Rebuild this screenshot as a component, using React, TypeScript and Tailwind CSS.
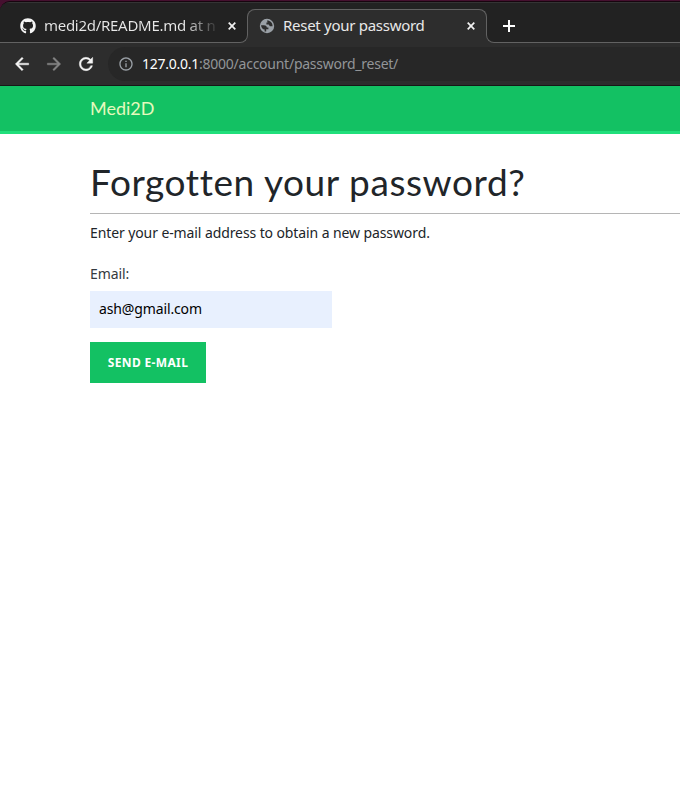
import type { ReactNode } from "react";
import { FaGithub } from "react-icons/fa";
import { MdInfoOutline } from "react-icons/md";

function GlobeIcon() {
  return (
    <svg width="16" height="16" viewBox="0 0 16 16" className="shrink-0">
      <circle cx="8" cy="8" r="7.2" fill="#9aa0a6" />
      <path
        d="M2 7.2 H5 C6.6 7.2 7.8 8 7.8 9.6 H9.4 V11.2 H7.2 V13.6 H5.6 V11.6 C3.6 11.4 2.4 9.6 2 7.2 Z M8 2.4 C11.6 2.4 13.6 5 13.6 8.2 H11 C10.4 8.2 10.4 6.8 9.6 6.4 H7.4 V4.4 H8.6 Z"
        fill="#2d2d2d"
      />
    </svg>
  );
}

function CloseIcon() {
  return (
    <svg width="8" height="8" viewBox="0 0 8 8" className="shrink-0">
      <path d="M0.7 0.7 L7.3 7.3 M7.3 0.7 L0.7 7.3" stroke="#f1f1f1" strokeWidth="1.7" />
    </svg>
  );
}

function NavIcon({ d, className }: { d: string; className: string }) {
  return (
    <svg width="20" height="20" viewBox="0 0 24 24" fill="currentColor" stroke="currentColor" strokeWidth="0.5" className={className}>
      <path d={d} />
    </svg>
  );
}

function Tab({ icon, children }: { icon: ReactNode; children: ReactNode }) {
  return (
    <div className="flex h-[33px] items-center pr-[11px] text-[15px] tracking-[-0.28px] text-[#e8e8e8]">
      {icon}
      {children}
      <CloseIcon />
    </div>
  );
}

function TabStrip() {
  return (
    <div className="flex h-[40px] bg-[#222222]">
      <div className="relative z-10 w-[247px] shrink-0 bg-[#222222]">
        <div className="absolute right-[-1px] bottom-0 h-[12px] w-[12px] bg-[#2d2d2d]" />
        <div className="absolute right-[-1px] bottom-0 left-0 h-[12px] rounded-br-[8px] border-r border-b border-[#626262] bg-[#222222]" />
        <div className="relative pt-[6px] pl-[20px]">
          <Tab icon={<FaGithub size={16} className="shrink-0 text-[#f5f5f5]" />}>
            <span className="ml-[8px] grow bg-linear-to-r from-[#e8e8e8] from-[140px] to-transparent to-[176px] bg-clip-text whitespace-nowrap text-transparent">
              medi2d/README.md at n
            </span>
          </Tab>
        </div>
      </div>
      <div className="relative mt-[6px] w-[240px] shrink-0 rounded-t-[8px] bg-[#2d2d2d] pr-px pl-[12px]">
        <div className="absolute inset-x-0 top-0 h-[23px] rounded-t-[8px] border-x border-t border-[#626262]" />
        <Tab icon={<GlobeIcon />}>
          <span className="ml-[8px] grow whitespace-nowrap">Reset your password</span>
        </Tab>
      </div>
      <div className="relative grow bg-[#222222]">
        <div className="absolute bottom-0 left-[-1px] h-[12px] w-[12px] bg-[#2d2d2d]" />
        <div className="absolute right-0 bottom-0 left-[-1px] h-[12px] rounded-bl-[8px] border-b border-l border-[#626262] bg-[#222222]" />
        <div className="relative flex h-[46px] items-center pl-[16px]">
          <svg width="12" height="12" viewBox="0 0 12 12">
            <path d="M0 6 H12 M6 0 V12" stroke="white" strokeWidth="2" />
          </svg>
        </div>
      </div>
    </div>
  );
}

function Toolbar() {
  return (
    <div className="flex h-[43px] items-center border-b border-[#171717] bg-[#2d2d2d] pl-[12px]">
      <NavIcon className="text-[#f5f5f5]" d="M20 11H7.83l5.59-5.59L12 4l-8 8 8 8 1.41-1.41L7.83 13H20v-2z" />
      <NavIcon className="ml-[12px] text-[#858585]" d="M12 4l-1.41 1.41L16.17 11H4v2h12.17l-5.58 5.59L12 20l8-8z" />
      <NavIcon
        className="ml-[12px] text-[#f5f5f5]"
        d="M17.65 6.35A7.958 7.958 0 0 0 12 4c-4.42 0-7.99 3.58-7.99 8s3.57 8 7.99 8c3.73 0 6.84-2.55 7.73-6h-2.08A5.99 5.99 0 0 1 12 18c-3.31 0-6-2.69-6-6s2.69-6 6-6c1.66 0 3.14.69 4.22 1.78L13 11h7V4l-2.35 2.35z"
      />
      <div className="ml-[12px] flex h-[34px] grow items-center rounded-l-full bg-[#272727] pl-[10px] text-[14px] text-[#929598]">
        <MdInfoOutline size={16} className="text-[#9aa0a6]" />
        <span className="ml-[8px] pb-[2px] tracking-[-0.25px]">
          <span className="text-white">127.0.0.1</span>:8000/account/password_reset/
        </span>
      </div>
    </div>
  );
}

export default function App() {
  return (
    <div className="flex h-[796px] w-[680px] flex-col overflow-hidden bg-white font-['Noto_Sans',sans-serif] text-[#212529]">
      <div className="bg-[#45102f]">
        <div className="mt-px overflow-hidden rounded-tl-[10px] border-t border-[#17050f] bg-[#222222]">
          <div className="h-px bg-[#343434]" />
          <TabStrip />
        </div>
      </div>
      <Toolbar />
      <header className="flex h-[48px] items-center border-b-[3px] border-[#20df7b] bg-[#13c163] pl-[90px]">
        <span className="font-['Lato',sans-serif] text-[18px] text-[#e5f9bd]">Medi2D</span>
      </header>
      <main className="flex flex-col items-start pl-[90px]">
        <h1 className="mt-[22px] h-[58px] w-full border-b border-[#b5b5b5] font-['Lato',sans-serif] text-[37px] leading-[52px] tracking-[0.58px] whitespace-nowrap">
          Forgotten your password?
        </h1>
        <p className="mt-[8px] text-[14px] leading-[22px] tracking-[-0.1px] whitespace-nowrap">
          Enter your e-mail address to obtain a new password.
        </p>
        <label className="mt-[19px] text-[14px] leading-[22px] tracking-[-0.1px] text-[#343a40]">Email:</label>
        <input
          readOnly
          value="ash@gmail.com"
          className="mt-[6px] h-[37px] w-[242px] bg-[#e8f0fe] px-[9px] pb-[2px] text-[14px] tracking-[-0.13px] text-black outline-none"
        />
        <button className="mt-[14px] h-[41px] w-[116px] bg-[#13c163] text-[12px] font-bold tracking-[0.35px] whitespace-nowrap text-white">
          SEND E-MAIL
        </button>
      </main>
    </div>
  );
}
